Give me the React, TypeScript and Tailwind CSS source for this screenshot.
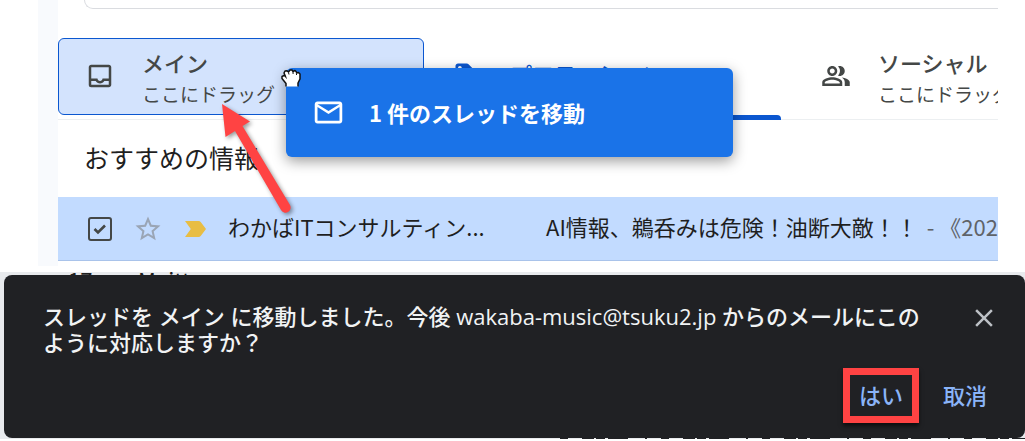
import type { ReactNode } from 'react';
import {
  MdClose,
  MdLocalOffer,
  MdOutlineInbox,
  MdOutlineMail,
  MdOutlinePeopleAlt,
  MdStarBorder,
} from 'react-icons/md';

interface TabProps {
  icon: ReactNode;
  title: string;
  hint?: string;
  state?: 'drop' | 'active';
}

const TAB_STYLES = {
  drop: 'border-[#0b57d0] bg-[#d3e3fd] text-[#444746]',
  active: 'border-transparent text-[#0b57d0]',
  idle: 'border-transparent text-[#444746]',
};

export default function App() {
  return (
    <div className="overflow-hidden bg-white font-['Noto_Sans_CJK_JP',sans-serif] text-[#1f1f1f]">
      <MailList />
      <Snackbar />
    </div>
  );
}

function MailList() {
  return (
    <section className="relative flex pb-[6px] pl-[38px] pr-[27px]">
      <div className="w-5 shrink-0 bg-[#f8fafd]" />

      <main className="min-w-0 flex-1 overflow-hidden pb-[5px]">
        {/* Нижний край панели поиска */}
        <div className="-mr-5 ml-[26px] h-[9px] rounded-bl-xl border-b border-l border-[#dadce0]" />

        {/* Вкладки */}
        <div role="tablist" className="mt-[29px] flex gap-[2px] border-b border-[#eceff1] pb-1">
          <Tab icon={<MdOutlineInbox size={30} />} title="メイン" hint="ここにドラッグ" state="drop" />
          <Tab icon={<MdLocalOffer size={30} />} title="プロモーション" state="active" />
          <Tab icon={<MdOutlinePeopleAlt size={30} />} title="ソーシャル" hint="ここにドラッグ" />
        </div>

        <h2 className="flex h-[77px] items-center pb-1 pl-[26px] text-[25px] leading-9">おすすめの情報</h2>

        <MailRow />
      </main>

      <DragCard />
      <PointerArrow />
    </section>
  );
}

function Tab({ icon, title, hint, state }: TabProps) {
  return (
    <button
      role="tab"
      aria-selected={state === 'active'}
      className={`relative flex h-[77px] w-[366px] shrink-0 items-center rounded-md border pl-[26px] text-left ${TAB_STYLES[state ?? 'idle']}`}
    >
      <span className="w-[57px] shrink-0 pb-[2px]">{icon}</span>
      <span className={`flex flex-col whitespace-nowrap ${hint ? 'pt-[2px]' : 'pb-2'}`}>
        <span className="text-[22px] font-medium leading-8">{title}</span>
        {hint && <span className="text-[19px] leading-8">{hint}</span>}
      </span>
      {state === 'active' && (
        <span className="absolute inset-x-[10px] -bottom-[6px] h-[5px] rounded-t bg-[#0b57d0]" />
      )}
    </button>
  );
}

function MailRow() {
  return (
    <div className="flex h-16 items-center whitespace-nowrap border-b border-[#a9c3ea] bg-[#c2dbff] pl-[30px] text-[22px]">
      <span className="relative flex size-6 shrink-0">
        <input
          type="checkbox"
          defaultChecked
          aria-label="スレッドを選択"
          className="peer size-6 appearance-none rounded-[3px] border-2 border-[#444746]"
        />
        <svg
          viewBox="0 0 24 24"
          className="pointer-events-none invisible absolute inset-0 text-[#444746] peer-checked:visible"
          fill="none"
          stroke="currentColor"
          strokeWidth="2.6"
        >
          <path d="M6.500 12l3.500 3.500 7-7" />
        </svg>
      </span>
      <button aria-label="スター" className="ml-[21px] shrink-0 text-[#9aa5b5]">
        <MdStarBorder size={30} />
      </button>
      <button aria-label="重要" className="ml-[22px] shrink-0">
        <svg width="21" height="16" viewBox="0 0 21 16" fill="#e8bd44">
          <path d="M0 0h13.5q1.5 0 2.4 1.2L21 8l-5.100 6.800q-.9 1.200-2.400 1.200H0l5.800-8z" />
        </svg>
      </button>
      <span className="ml-[22px] w-[318px] shrink-0 pb-1">わかばITコンサルティン...</span>
      <span className="pb-1">
        AI情報、鵜呑みは危険！油断大敵！！
        <span className="ml-1 text-[#5f6368]"> - 《2025年</span>
      </span>
    </div>
  );
}

// Карточка, которую тащат за курсором
function DragCard() {
  return (
    <div className="absolute left-[286px] top-[68px] flex h-[89px] w-[447px] items-center rounded-md bg-[#1a73e8] pl-[26px] text-white shadow-[0_4px_14px_rgba(0,0,0,0.4)]">
      <MdOutlineMail size={33} />
      <span className="ml-6 text-[22px] font-bold">1 件のスレッドを移動</span>
      <svg
        className="absolute -left-[5px] top-[1px]"
        width="20"
        height="19"
        viewBox="0 0 20 19"
        fill="#fff"
        stroke="#111"
        strokeWidth="1.5"
        strokeLinejoin="round"
      >
        <path d="M5 17.500v-3L1 9.500V7.500l2-1 1.500 1L3 4l1-2 2-.2L7.500 3 9 1h2l1 1.500L14 1.500l1.500 1.500v1l2-.5L19 5v5l-2 4v3.500" />
        <path d="M7.500 3.500l.5 2M12 3l.1 2M15.500 4.500v1.500M4.500 7.500l1 2" strokeWidth="1" />
      </svg>
    </div>
  );
}

function PointerArrow() {
  return (
    <svg
      className="absolute left-[216px] top-[98px] drop-shadow-[2px_2px_2px_rgba(0,0,0,0.4)]"
      width="80"
      height="118"
      viewBox="216 98 80 118"
      fill="#ff4343"
    >
      <path d="M222 104l28 17.500-7.500 4.500L290 205a5 5 0 0 1-9 5L235 131l-9.500 6z" />
    </svg>
  );
}

function Snackbar() {
  return (
    <section className="bg-[#e8eaed] pl-1">
      {/* Верх строки, закрытой уведомлением */}
      <div className="flex h-[3px] items-start overflow-hidden pl-[64px] text-[22px] leading-[14px]">
        <span className="w-[70px]">17</span>
        <span>Maitt</span>
      </div>

      <div role="alert" className="rounded-lg bg-[#202124] pl-[39px] pr-[26px] pt-7 text-[22px] text-[#f1f3f4]">
        <div className="flex items-start">
          <p className="max-w-[890px] flex-1 font-['Open_Sans','Noto_Sans_CJK_JP',sans-serif] font-medium leading-[26px]">
            スレッドを メイン に移動しました。今後 wakaba-music@tsuku2.jp からのメールにこのように対応しますか？
          </p>
          <button aria-label="閉じる" className="ml-auto text-[#bdc1c6]">
            <MdClose size={30} />
          </button>
        </div>
        <div className="flex h-[83px] items-center justify-end gap-10 pb-1 pr-3 font-medium text-[#8ab4f8]">
          <button className="relative">
            はい
            <span className="absolute -inset-x-4 -bottom-3 -top-[10px] border-[7px] border-[#ff4343] shadow-[0_3px_4px_rgba(0,0,0,0.6)]" />
          </button>
          <button>取消</button>
        </div>
      </div>

      <svg className="block h-[1px] w-full text-[#202124]" stroke="currentColor">
        <path d="M556 .5H1021" strokeDasharray="8 14 12 2 9 3 20 17 2 14" />
      </svg>
      <div className="-ml-1 h-[2px] bg-white" />
    </section>
  );
}
